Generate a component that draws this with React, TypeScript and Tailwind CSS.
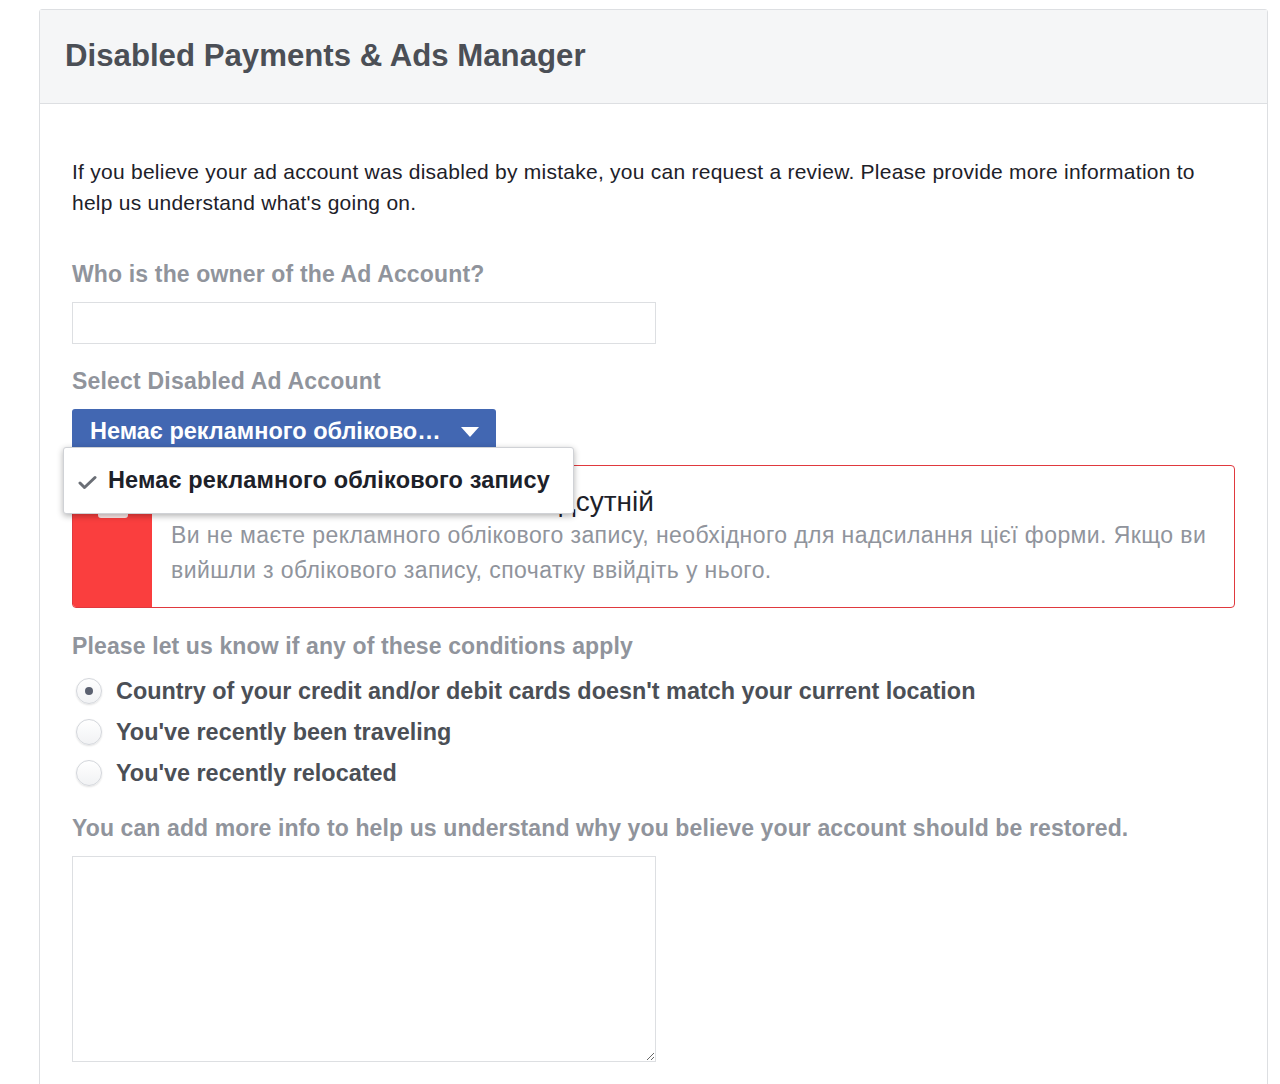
import { useState } from 'react';

const conditions = [
  "Country of your credit and/or debit cards doesn't match your current location",
  "You've recently been traveling",
  "You've recently relocated",
];

function Radio({ checked }: { checked: boolean }) {
  return (
    <span className="w-[26px] h-[26px] rounded-full border border-[#d3d6db] bg-gradient-to-b from-white to-[#f1f2f4] shadow-[0_1px_2px_rgba(0,0,0,0.12)] flex items-center justify-center shrink-0">
      {checked && <span className="w-[8px] h-[8px] rounded-full bg-[#5b6170]" />}
    </span>
  );
}

export default function App() {
  const [selected, setSelected] = useState(0);

  return (
    <div className="min-h-[1084px] bg-white pt-[9px] pl-[39px] pr-[12px] font-['Liberation_Sans',Arial,sans-serif]">
      <div className="border border-[#dddfe2] rounded-t-[3px] bg-white min-h-[1080px]">
        <div className="h-[94px] bg-[#f5f6f7] border-b border-[#dddfe2] flex items-center pl-[25px]">
          <h1 className="text-[31.2px] font-bold text-[#4b4f56]">Disabled Payments &amp; Ads Manager</h1>
        </div>

        <div className="pl-[32px] pr-[32px] pt-[52px]">
          <p className="text-[21px] leading-[31px] tracking-[0.25px] text-[#1d2129]">
            If you believe your ad account was disabled by mistake, you can request a review. Please provide more information to help us understand what's going on.
          </p>

          <div className="mt-[42px] text-[23px] leading-[28px] tracking-[0.15px] font-bold text-[#90949c]">Who is the owner of the Ad Account?</div>
          <input className="mt-[14px] block w-[584px] h-[42px] border border-[#dddfe2] outline-none px-2 text-[18px]" />

          <div className="mt-[23px] text-[23px] leading-[28px] tracking-[0.2px] font-bold text-[#90949c]">Select Disabled Ad Account</div>

          <div className="relative mt-[14px] w-[424px]">
            <button className="w-[424px] h-[46px] rounded-t-[3px] bg-[#4267b2] text-white text-[23.5px] font-bold flex items-center justify-between pl-[18px] pr-[17px]">
              <span>Немає рекламного обліково…</span>
              <svg width="18" height="11" viewBox="0 0 18 11"><path d="M0 0h18L9 10z" fill="#fff" /></svg>
            </button>
            <div className="absolute left-[-9px] top-[38px] w-[511px] h-[67px] bg-white rounded-[3px] shadow-[0_2px_6px_rgba(0,0,0,0.3)] border border-[#d0d2d6] flex items-center pl-[14px] z-10">
              <svg width="19" height="15" viewBox="0 0 19 15" className="mt-[4px]">
                <path d="M2 8l4.5 4.5L17 2.5" stroke="#6a6e75" strokeWidth="3" fill="none" strokeLinecap="round" strokeLinejoin="round" />
              </svg>
              <span className="ml-[11px] text-[23.5px] tracking-[0.15px] font-bold text-[#1d2129]">Немає рекламного облікового запису</span>
            </div>
          </div>

          <div className="mt-[10px] w-[1163px] h-[143px] border-[1.5px] border-[#e0393e] rounded-[4px] flex overflow-hidden">
            <div className="w-[79px] bg-[#fa3e3e] shrink-0 pt-[32px] pl-[25px]">
              <div className="w-[30px] h-[20px] bg-white rounded-[3px] opacity-90" />
            </div>
            <div className="pl-[19px] pr-[14px] pt-[20px]">
              <div className="text-[28px] leading-[32px] text-[#1d2129]">Рекламний обліковий запис відсутній</div>
              <div className="text-[23px] leading-[35px] tracking-[0.42px] text-[#90949c]">
                Ви не маєте рекламного облікового запису, необхідного для надсилання цієї форми. Якщо ви вийшли з облікового запису, спочатку ввійдіть у нього.
              </div>
            </div>
          </div>

          <div className="mt-[24px] text-[23px] leading-[28px] tracking-[0.12px] font-bold text-[#90949c]">Please let us know if any of these conditions apply</div>

          <div className="mt-[17px] flex flex-col gap-[13px]">
            {conditions.map((c, i) => (
              <label key={c} className="flex items-center gap-[14px] pl-[4px] cursor-pointer" onClick={() => setSelected(i)}>
                <Radio checked={selected === i} />
                <span className="text-[23.4px] leading-[28px] font-bold text-[#4b4f56]">{c}</span>
              </label>
            ))}
          </div>

          <div className="mt-[27px] text-[23px] leading-[28px] tracking-[0.11px] font-bold text-[#90949c]">You can add more info to help us understand why you believe your account should be restored.</div>
          <textarea className="mt-[14px] block w-[584px] h-[206px] border border-[#dddfe2] outline-none p-2 text-[18px]" />
        </div>
      </div>
    </div>
  );
}
